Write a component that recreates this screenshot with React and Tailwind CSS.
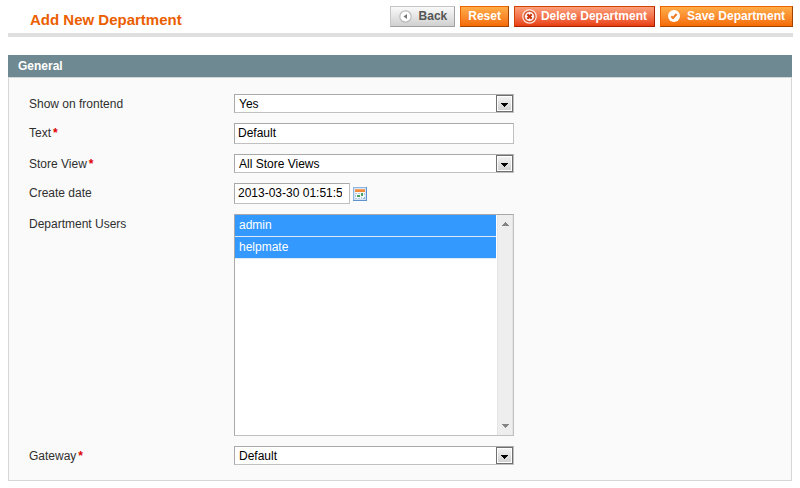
import React from 'react';

function Required() {
  return <span className="ml-[2px] text-[#dd0000] font-bold">*</span>;
}

function Row({ id, label, required, children }) {
  return (
    <div className="flex items-start">
      <label htmlFor={id} className="w-[205px] shrink-0 pt-[2px] leading-4 text-[#2f2f2f]">
        {label}
        {required && <Required />}
      </label>
      {children}
    </div>
  );
}

function Select({ id, options }) {
  return (
    <div className="relative w-[280px]">
      <select
        id={id}
        className="block h-[19px] w-full appearance-none border border-[#a9a9a9] border-r-[#c0c0c0] border-b-[#c0c0c0] bg-white pl-1 leading-4 text-black"
      >
        {options.map((option) => (
          <option key={option}>{option}</option>
        ))}
      </select>
      <span className="pointer-events-none absolute top-px right-px flex h-[17px] w-[17px] items-center justify-center border border-[#6f6f6f] bg-gradient-to-b from-[#f4f4f4] to-[#cfcfcf] pt-[2px] ring-1 ring-white ring-inset">
        <svg width="7" height="4" viewBox="0 0 7 4" shapeRendering="crispEdges">
          <path d="M0 0h7v1H0zM1 1h5v1H1zM2 2h3v1H2zM3 3h1v1H3z" fill="#000" />
        </svg>
      </span>
    </div>
  );
}

const inputClass =
  'block h-[21px] border border-[#a9a9a9] border-r-[#c0c0c0] border-b-[#c0c0c0] bg-white pl-[3px] pr-[7px] pb-px text-black';

const buttonClass =
  'flex h-[21px] items-center border font-bold leading-4 whitespace-nowrap px-[7px] pb-px';

const orangeClass =
  'border-[#ed6502] border-r-[#a04300] border-b-[#a04300] bg-gradient-to-b from-[#ffac47] to-[#f46b00] text-white';

function BackIcon() {
  return (
    <svg width="13" height="13" viewBox="0 0 13 13" className="mr-[7px] ml-px">
      <circle cx="6.5" cy="6.5" r="5.7" fill="#fff" stroke="#bcbcbc" strokeWidth="1.2" />
      <path d="M8 4v5L4.5 6.5z" fill="#777" />
    </svg>
  );
}

function DeleteIcon() {
  return (
    <svg width="15" height="15" viewBox="0 0 15 15" className="mr-1">
      <circle cx="7.5" cy="7.5" r="6.7" fill="#d8451d" stroke="#fde4da" strokeWidth="1.3" />
      <circle cx="7.5" cy="7.5" r="5" fill="#fff" stroke="#d8552f" strokeWidth="1" />
      <path d="M5.3 5.3l4.4 4.4M9.7 5.3l-4.4 4.4" stroke="#c8330c" strokeWidth="2.2" />
    </svg>
  );
}

function SaveIcon() {
  return (
    <svg width="12" height="12" viewBox="0 0 12 12" className="mr-[7px]">
      <circle cx="6" cy="6" r="6" fill="#fff" />
      <path d="M3.3 6.2l1.8 1.9L8.6 4" fill="none" stroke="#ef7a22" strokeWidth="2" />
    </svg>
  );
}

function CalendarIcon() {
  return (
    <svg width="14" height="14" viewBox="0 0 14 14" shapeRendering="crispEdges">
      <rect width="14" height="14" fill="#5f93cf" />
      <rect width="13" height="13" fill="#8fb5e2" />
      <rect x="1" y="1" width="12" height="12" fill="#d3e4f7" />
      <rect x="2" y="5" width="10" height="7" fill="#f2f7fc" />
      <rect x="2" y="2" width="10" height="3" fill="#f28a3c" />
      <rect x="2" y="2" width="10" height="1" fill="#f8a866" />
      <path d="M2 6h2v1H2zM5 6h2v1H5zM2 8h1v2H2zM11 6h1v2h-1zM2 11h2v1H2zM5 11h2v1H5zM8 10h1v2H8z" fill="#b5c9e2" />
      <path d="M8 6h2v3H8zM4 8h3v2H4z" fill="#4fa25f" />
      <path d="M10 12h2v-2h-1v1h-1z" fill="#8fb5e2" />
    </svg>
  );
}

export default function App() {
  return (
    <div className="min-h-screen bg-white pt-[6px] pb-[7px] font-['Liberation_Sans',Arial,sans-serif] text-xs">
      <header className="mr-[7px] ml-2 flex items-start justify-between border-b-4 border-[#dfdfdf] pb-[5px]">
        <h1 className="pt-[6px] pl-[22px] text-[15px] leading-4 font-bold text-[#eb5e00]">Add New Department</h1>
        <div className="flex gap-[5px]">
          <button
            type="button"
            className={`${buttonClass} border-[#c6c6c6] border-r-[#a0a0a0] border-b-[#a0a0a0] bg-gradient-to-b from-[#fafafa] to-[#d0d0d0] text-[#555]`}
          >
            <BackIcon />
            Back
          </button>
          <button type="button" className={`${buttonClass} ${orangeClass}`}>
            Reset
          </button>
          <button
            type="button"
            className={`${buttonClass} border-[#d24403] border-r-[#a92000] border-b-[#a92000] bg-gradient-to-b from-[#fba07a] to-[#e83c0b] text-white`}
          >
            <DeleteIcon />
            Delete Department
          </button>
          <button type="button" className={`${buttonClass} ${orangeClass}`}>
            <SaveIcon />
            Save Department
          </button>
        </div>
      </header>

      <main className="mx-2 mt-[18px]">
        <h2 className="bg-[#6f8992] pt-[3px] pb-[3px] pl-[10px] leading-4 font-bold text-white">General</h2>
        <form className="flex flex-col gap-[10px] border border-[#d6d6d6] bg-[#fafafa] px-5 pt-4 pb-[15px]">
          <Row id="frontend" label="Show on frontend">
            <Select id="frontend" options={['Yes', 'No']} />
          </Row>
          <Row id="text" label="Text" required>
            <input id="text" type="text" defaultValue="Default" className={`${inputClass} w-[280px]`} />
          </Row>
          <Row id="store" label="Store View" required>
            <Select id="store" options={['All Store Views']} />
          </Row>
          <Row id="created" label="Create date">
            <input id="created" type="text" defaultValue="2013-03-30 01:51:55" className={`${inputClass} w-[116px]`} />
            <button type="button" aria-label="Pick a date" className="mt-1 ml-[3px]">
              <CalendarIcon />
            </button>
          </Row>
          <Row id="users" label="Department Users">
            <div className="relative w-[280px]">
              <select
                id="users"
                multiple
                defaultValue={['admin', 'helpmate']}
                className="block h-[222px] w-full overflow-hidden rounded-none border border-[#a9a9a9] border-r-[#c0c0c0] border-b-[#c0c0c0] bg-white pr-[17px]"
              >
                {['admin', 'helpmate'].map((user) => (
                  <option
                    key={user}
                    value={user}
                    className="h-[22px] min-h-0 border-b border-[#dfe9f3] bg-linear-to-b from-[#3399ff] to-[#3399ff] bg-clip-padding px-1 py-[3px] leading-4 [-webkit-text-fill-color:#ffffff]"
                  >
                    {user}
                  </option>
                ))}
              </select>
              <span className="pointer-events-none absolute top-px right-px bottom-px flex w-4 flex-col items-center justify-between border-x border-[#e4e4e4] bg-[#eeeeee] py-[7px]">
                <svg width="7" height="4" viewBox="0 0 7 4" shapeRendering="crispEdges">
                  <path d="M3 0h1v1H3zM2 1h3v1H2zM1 2h5v1H1zM0 3h7v1H0z" fill="#858585" />
                </svg>
                <svg width="7" height="4" viewBox="0 0 7 4" shapeRendering="crispEdges">
                  <path d="M0 0h7v1H0zM1 1h5v1H1zM2 2h3v1H2zM3 3h1v1H3z" fill="#858585" />
                </svg>
              </span>
            </div>
          </Row>
          <Row id="gateway" label="Gateway" required>
            <Select id="gateway" options={['Default']} />
          </Row>
        </form>
      </main>
    </div>
  );
}
